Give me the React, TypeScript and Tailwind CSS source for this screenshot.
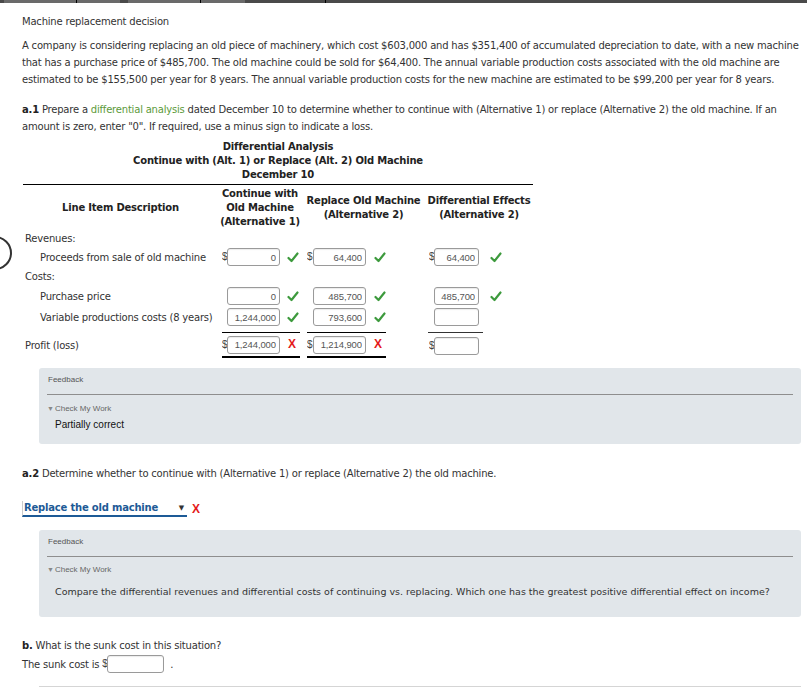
import React from 'react';

const body = "font-['DejaVu_Sans',Verdana,sans-serif]";
const arial = "font-['Liberation_Sans',Arial,sans-serif]";

function Check() {
  return (
    <svg width="12" height="11" viewBox="0 0 12 11" className="shrink-0">
      <path d="M1.5 6 L4.5 9 L10.5 1.5" fill="none" stroke="#3d9a3d" strokeWidth="2.2" strokeLinecap="round" strokeLinejoin="round" />
    </svg>
  );
}

function Cross() {
  return <span className={`${arial} text-[12px] font-bold leading-none tracking-normal text-[#e41a1a]`}>X</span>;
}

function Box({ value = '', w }: { value?: string; w: string }) {
  return (
    <input
      readOnly
      value={value}
      className={`${w} h-[18px] shrink-0 rounded-[3px] border border-[#9a9a9a] bg-white px-[3px] text-right ${arial} text-[9.5px] tracking-[-0.1px] text-[#555] outline-none shadow-[inset_0_1px_1px_rgba(0,0,0,0.08)]`}
    />
  );
}

function Dollar({ show = true, w }: { show?: boolean; w: string }) {
  return (
    <span className={`${w} shrink-0 overflow-hidden ${arial} text-[10px] leading-none tracking-normal text-[#444]`}>{show ? '$' : ''}</span>
  );
}

type Cell = { value?: string; dollar?: boolean; mark?: 'ok' | 'bad' };

function Col2({ c }: { c: Cell }) {
  return (
    <div className="flex w-[84px] shrink-0 items-center pl-[4px]">
      <Dollar show={!!c.dollar} w="w-[5px]" />
      <Box value={c.value} w="w-[53px]" />
      <span className="ml-[7px]">{c.mark === 'ok' ? <Check /> : c.mark === 'bad' ? <Cross /> : null}</span>
    </div>
  );
}

function Col3({ c }: { c: Cell }) {
  return (
    <div className="flex w-[123px] shrink-0 items-center pl-[5px]">
      <Dollar show={!!c.dollar} w="w-[6px]" />
      <Box value={c.value} w="w-[53px]" />
      <span className="ml-[8px]">{c.mark === 'ok' ? <Check /> : c.mark === 'bad' ? <Cross /> : null}</span>
    </div>
  );
}

function Col4({ c }: { c: Cell }) {
  return (
    <div className="flex w-[108px] shrink-0 items-center pl-[4px]">
      <Dollar show={!!c.dollar} w="w-[5px]" />
      <Box value={c.value} w="w-[45px]" />
      <span className="ml-[11px]">{c.mark === 'ok' ? <Check /> : null}</span>
    </div>
  );
}

function Feedback({ children, height }: { children: React.ReactNode; height: string }) {
  return (
    <div className={`ml-[17px] ${height} rounded-[3px] bg-[#e1e6ea] px-[8px] pt-[6px] tracking-normal`}>
      <div className={`${arial} pl-[1px] text-[8px] leading-[12px] text-[#555]`}>Feedback</div>
      <div className="mt-[8px] h-px bg-[#8e8e8e]" />
      {children}
    </div>
  );
}

function CheckMyWork() {
  return (
    <div className={`${arial} flex items-center text-[8px] leading-[12px] text-[#666]`}>
      <span className="mr-[1px] text-[7px] text-[#888]">▼</span>Check My Work
    </div>
  );
}

export default function App() {
  return (
    <div className={`relative min-h-[688px] w-[807px] overflow-hidden bg-white ${body} text-[10px] tracking-[-0.2px] text-[#333]`}>
      {/* top bar */}
      <div className="flex h-[3px] bg-[#4a4a4a]">
        <div className="ml-[4px] w-[73px] border-r border-black bg-[#6a6a6a]" />
        <div className="w-[43px] bg-[#6a6a6a]" />
        <div className="ml-[8px] w-[73px] border-r border-black bg-[#6a6a6a]" />
        <div className="w-[44px] bg-[#6a6a6a]" />
        <div className="ml-[80px] w-px bg-black" />
      </div>

      <div className="pl-[22px] pr-[6px]">
        <div className="mt-[10px] leading-[17px]">Machine replacement decision</div>

        <div className="mt-[7px] whitespace-nowrap leading-[17px]">
          <div>A company is considering replacing an old piece of machinery, which cost $603,000 and has $351,400 of accumulated depreciation to date, with a new machine</div>
          <div>that has a purchase price of $485,700. The old machine could be sold for $64,400. The annual variable production costs associated with the old machine are</div>
          <div>estimated to be $155,500 per year for 8 years. The annual variable production costs for the new machine are estimated to be $99,200 per year for 8 years.</div>
        </div>

        <div className="mt-[13px] whitespace-nowrap leading-[17px]">
          <div>
            <b className="text-[#222]">a.1</b> Prepare a <span className="text-[#5c9a3a]">differential analysis</span> dated December 10 to determine whether to continue with (Alternative 1) or replace (Alternative 2) the old machine. If an
          </div>
          <div>amount is zero, enter "0". If required, use a minus sign to indicate a loss.</div>
        </div>

        {/* table */}
        <div className="mt-[5px] w-[511px] pl-px">
          <div className="border-b border-black pb-[2px] text-center font-bold leading-[14px] text-[#222]">
            <div>Differential Analysis</div>
            <div>Continue with (Alt. 1) or Replace (Alt. 2) Old Machine</div>
            <div>December 10</div>
          </div>

          <div className="flex h-[45px] items-center pt-[1px] text-center font-bold leading-[14px] text-[#222]">
            <div className="w-[195px] shrink-0">Line Item Description</div>
            <div className="w-[84px] shrink-0">Continue with<br />Old Machine<br />(Alternative 1)</div>
            <div className="w-[123px] shrink-0">Replace Old Machine<br />(Alternative 2)</div>
            <div className="w-[108px] shrink-0">Differential Effects<br />(Alternative 2)</div>
          </div>

          <div className="flex h-[17px] items-center pl-[2px]">Revenues:</div>

          <div className="flex h-[20px] items-center">
            <div className="w-[195px] shrink-0 whitespace-nowrap pl-[17px]">Proceeds from sale of old machine</div>
            <Col2 c={{ value: '0', dollar: true, mark: 'ok' }} />
            <Col3 c={{ value: '64,400', dollar: true, mark: 'ok' }} />
            <Col4 c={{ value: '64,400', dollar: true, mark: 'ok' }} />
          </div>

          <div className="flex h-[20px] items-center pb-[2px] pl-[2px]">Costs:</div>

          <div className="flex h-[19px] items-start">
            <div className="w-[195px] shrink-0 self-center whitespace-nowrap pl-[17px]">Purchase price</div>
            <Col2 c={{ value: '0', mark: 'ok' }} />
            <Col3 c={{ value: '485,700', mark: 'ok' }} />
            <Col4 c={{ value: '485,700', mark: 'ok' }} />
          </div>

          <div className="mt-[2px] flex h-[18px] items-center">
            <div className="w-[195px] shrink-0 whitespace-nowrap pl-[17px]">Variable productions costs (8 years)</div>
            <Col2 c={{ value: '1,244,000', mark: 'ok' }} />
            <Col3 c={{ value: '793,600', mark: 'ok' }} />
            <Col4 c={{}} />
          </div>

          <div className="mt-[6px] flex h-[26px] items-stretch">
            <div className="flex w-[195px] shrink-0 items-center pl-[2px]">Profit (loss)</div>
            <div className="w-[84px] shrink-0 pl-[4px]">
              <div className="flex h-full w-[78px] items-center border-t border-b-2 border-black">
                <Dollar w="w-[5px]" />
                <Box value="1,244,000" w="w-[53px]" />
                <span className="ml-[8px]"><Cross /></span>
              </div>
            </div>
            <div className="w-[123px] shrink-0 pl-[5px]">
              <div className="flex h-full w-[79px] items-center border-t border-b-2 border-black">
                <Dollar w="w-[6px]" />
                <Box value="1,214,900" w="w-[53px]" />
                <span className="ml-[8px]"><Cross /></span>
              </div>
            </div>
            <div className="w-[108px] shrink-0 pl-[3px]">
              <div className="flex h-full w-[55px] items-center border-t">
                <span className="w-[1px]" />
                <Dollar w="w-[5px]" />
                <Box w="w-[45px]" />
              </div>
            </div>
          </div>
        </div>

        <div className="mt-[10px]">
          <Feedback height="h-[76px]">
            <div className="mt-[8px]"><CheckMyWork /></div>
            <div className={`${arial} mt-[4px] pl-[8px] text-[10px] leading-[12px] text-[#111]`}>Partially correct</div>
          </Feedback>
        </div>

        <div className="mt-[21px] leading-[17px]">
          <b className="text-[#222]">a.2</b> Determine whether to continue with (Alternative 1) or replace (Alternative 2) the old machine.
        </div>

        <div className="mt-[19px] flex items-center">
          <div className="flex h-[16px] w-[165px] items-center justify-between border-b-2 border-l border-[#1d5a96] border-l-[#ccc] pl-px pr-[3px]">
            <span className="font-bold text-[10px] leading-none text-[#1d5a96]">Replace the old machine</span>
            <span className="text-[7px] text-[#333]">▼</span>
          </div>
          <span className="ml-[5px]"><Cross /></span>
        </div>

        <div className="mt-[13px]">
          <Feedback height="h-[87px]">
            <div className="mt-[7px]"><CheckMyWork /></div>
            <div className="mt-[9px] pl-[8px] text-[9.5px] leading-[14px] text-[#333]">
              Compare the differential revenues and differential costs of continuing vs. replacing. Which one has the greatest positive differential effect on income?
            </div>
          </Feedback>
        </div>

        <div className="mt-[20px] leading-[17px]">
          <b className="text-[#222]">b.</b> What is the sunk cost in this situation?
        </div>
        <div className="mt-[1px] flex items-center">
          <span className="mr-[3px]">The sunk cost is</span>
          <Dollar w="w-[5px]" />
          <Box w="w-[57px]" />
          <span className="ml-[6px]">.</span>
        </div>

        <div className="ml-[17px] mt-[13px] h-px bg-[#d5d5d5]" />
      </div>

      {/* partial circle indicator at left edge */}
      <div className="absolute left-[-22px] top-[236px] h-[34px] w-[34px] rounded-full border-2 border-[#333]" />
    </div>
  );
}
